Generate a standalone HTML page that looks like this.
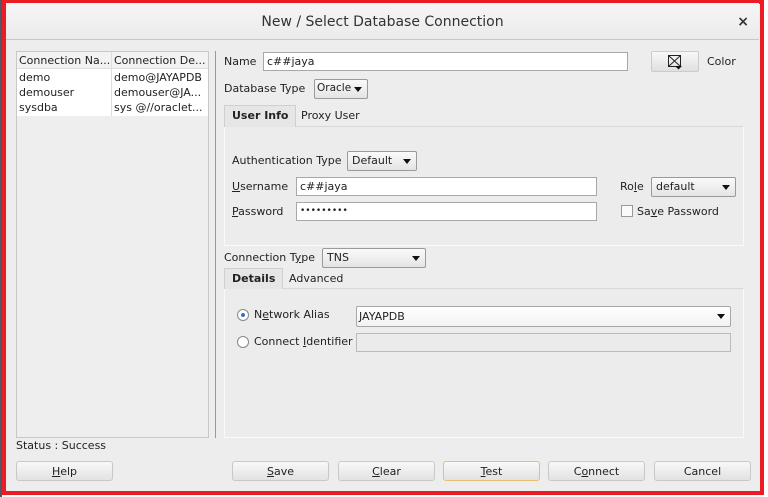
<!DOCTYPE html>
<html><head><meta charset="utf-8"><style>
*{box-sizing:border-box;margin:0;padding:0}
body{width:768px;height:497px;background:#fff;position:relative;overflow:hidden;font-family:"DejaVu Sans","Liberation Sans",sans-serif;font-size:11px;color:#222}
.a{position:absolute}
.dlg{left:2px;top:0;width:762px;height:495px;background:#ededed;border:4px solid #ec1c24}
.title{left:6px;top:3px;width:753px;height:37px;background:linear-gradient(#f6f6f6,#ebebeb);border-bottom:1px solid #c8c8c8;text-align:center;font-size:14px;line-height:39px;color:#333}
.inp{background:#fff;border:1px solid #a8a8a8}
.sel{background:linear-gradient(#fafafa,#e4e4e4);border:1px solid #9a9a9a;border-radius:2px;padding-left:4px;line-height:17px}
.sel:after{content:"";position:absolute;right:5px;top:7px;border:4px solid transparent;border-top:5px solid #111;border-bottom:0}
.btn{top:461px;width:97px;height:20px;background:linear-gradient(#f8f8f8,#e2e2e2);border:1px solid #c8c8c8;border-radius:3px;text-align:center;line-height:19px;font-size:11px}
u{text-decoration:underline}
.panel{border:1px solid #fafafa;border-top-color:#d8d8d8;background:#ececec}
.tab{background:#e6e6e6;border:1px solid #cfcfcf;border-bottom:0;font-weight:bold;padding:0 7px;line-height:20px}
.radio{width:12px;height:12px;border:1px solid #888;border-radius:50%;background:#fff}
</style></head><body>
<div class="a" style="left:0;top:0;width:2px;height:497px;background:#556"></div>
<div class="a dlg"></div>
<div class="a title">New / Select Database Connection<span class="a" style="right:10px;top:0;font-size:14px;font-weight:bold">×</span></div>

<div class="a" style="left:16px;top:51px;width:193px;height:387px;border:1px solid #c8c8c8;background:#eee"></div>
<div class="a" style="left:17px;top:52px;width:191px;height:64px;background:#fff"></div>
<div class="a" style="left:17px;top:52px;width:191px;height:17px;background:#f2f2f2;border-bottom:1px solid #ddd"></div>
<div class="a" style="left:111px;top:52px;width:1px;height:64px;background:#ddd"></div>
<div class="a" style="left:19px;top:54px;line-height:14px">Connection Na...</div>
<div class="a" style="left:114px;top:54px;line-height:14px">Connection De...</div>
<div class="a" style="left:19px;top:70px;line-height:15px">demo<br>demouser<br>sysdba</div>
<div class="a" style="left:114px;top:70px;line-height:15px">demo@JAYAPDB<br>demouser@JA...<br>sys @//oraclet...</div>
<div class="a" style="left:215px;top:51px;width:1px;height:387px;background:#999"></div>

<div class="a" style="left:224px;top:55px">Name</div>
<div class="a inp" style="left:263px;top:52px;width:365px;height:19px;padding:2px 3px">c##jaya</div>
<div class="a" style="left:651px;top:51px;width:48px;height:21px;background:linear-gradient(#f8f8f8,#e0e0e0);border:1px solid #ccc;border-radius:2px"><svg width="16" height="16" style="position:absolute;left:15px;top:2px" viewBox="0 0 16 16"><rect x="1.5" y="1.5" width="12" height="11" fill="none" stroke="#222"/><path d="M1.5 1.5L13.5 12.5M13.5 1.5L1.5 12.5" stroke="#222"/><path d="M8 12h7l-3.5 3.5z" fill="#111"/></svg></div>
<div class="a" style="left:707px;top:55px">Color</div>

<div class="a" style="left:224px;top:82px">Database Type</div>
<div class="a sel" style="left:314px;top:79px;width:54px;height:20px;padding-left:2px;font-size:10.5px">Oracle</div>

<div class="a panel" style="left:224px;top:126px;width:520px;height:120px"></div>
<div class="a tab" style="left:224px;top:105px;height:22px">User Info</div>
<div class="a" style="left:301px;top:109px">Proxy User</div>

<div class="a" style="left:232px;top:154px">Authentication Type</div>
<div class="a sel" style="left:347px;top:151px;width:70px;height:20px">Default</div>
<div class="a" style="left:232px;top:180px"><u>U</u>sername</div>
<div class="a inp" style="left:296px;top:177px;width:301px;height:19px;padding:2px 3px">c##jaya</div>
<div class="a" style="left:620px;top:180px">Ro<u>l</u>e</div>
<div class="a sel" style="left:651px;top:177px;width:85px;height:20px">default</div>
<div class="a" style="left:232px;top:205px"><u>P</u>assword</div>
<div class="a inp" style="left:296px;top:202px;width:301px;height:19px;padding:0 3px;line-height:17px;font-size:9px">•••••••••</div>
<div class="a" style="left:621px;top:205px;width:12px;height:12px;border:1px solid #999;background:#fafafa"></div>
<div class="a" style="left:637px;top:205px">Sa<u>v</u>e Password</div>

<div class="a" style="left:224px;top:251px">Connection T<u>y</u>pe</div>
<div class="a sel" style="left:322px;top:248px;width:104px;height:20px">TNS</div>

<div class="a panel" style="left:224px;top:288px;width:520px;height:150px"></div>
<div class="a tab" style="left:224px;top:268px;height:21px">Details</div>
<div class="a" style="left:289px;top:272px">Advanced</div>

<div class="a radio" style="left:237px;top:309px"><div class="a" style="left:3px;top:3px;width:4px;height:4px;border-radius:50%;background:#3a6fc4"></div></div>
<div class="a" style="left:254px;top:308px">N<u>e</u>twork Alias</div>
<div class="a inp" style="left:356px;top:306px;width:375px;height:21px;border-radius:2px;padding:3px 2px;background:linear-gradient(#fff,#f2f2f2)">JAYAPDB<span class="a" style="right:5px;top:7px;border:4px solid transparent;border-top:5px solid #111;border-bottom:0"></span></div>
<div class="a radio" style="left:237px;top:336px"></div>
<div class="a" style="left:254px;top:335px">Connect <u>I</u>dentifier</div>
<div class="a" style="left:356px;top:333px;width:375px;height:19px;border:1px solid #bbb;background:#ebebeb"></div>

<div class="a" style="left:16px;top:439px">Status : Success</div>
<div class="a btn" style="left:16px"><u>H</u>elp</div>
<div class="a btn" style="left:232px"><u>S</u>ave</div>
<div class="a btn" style="left:338px"><u>C</u>lear</div>
<div class="a btn" style="left:443px;border-color:#e8c070"><u>T</u>est</div>
<div class="a btn" style="left:548px">C<u>o</u>nnect</div>
<div class="a btn" style="left:654px">Cancel</div>
</body></html>
